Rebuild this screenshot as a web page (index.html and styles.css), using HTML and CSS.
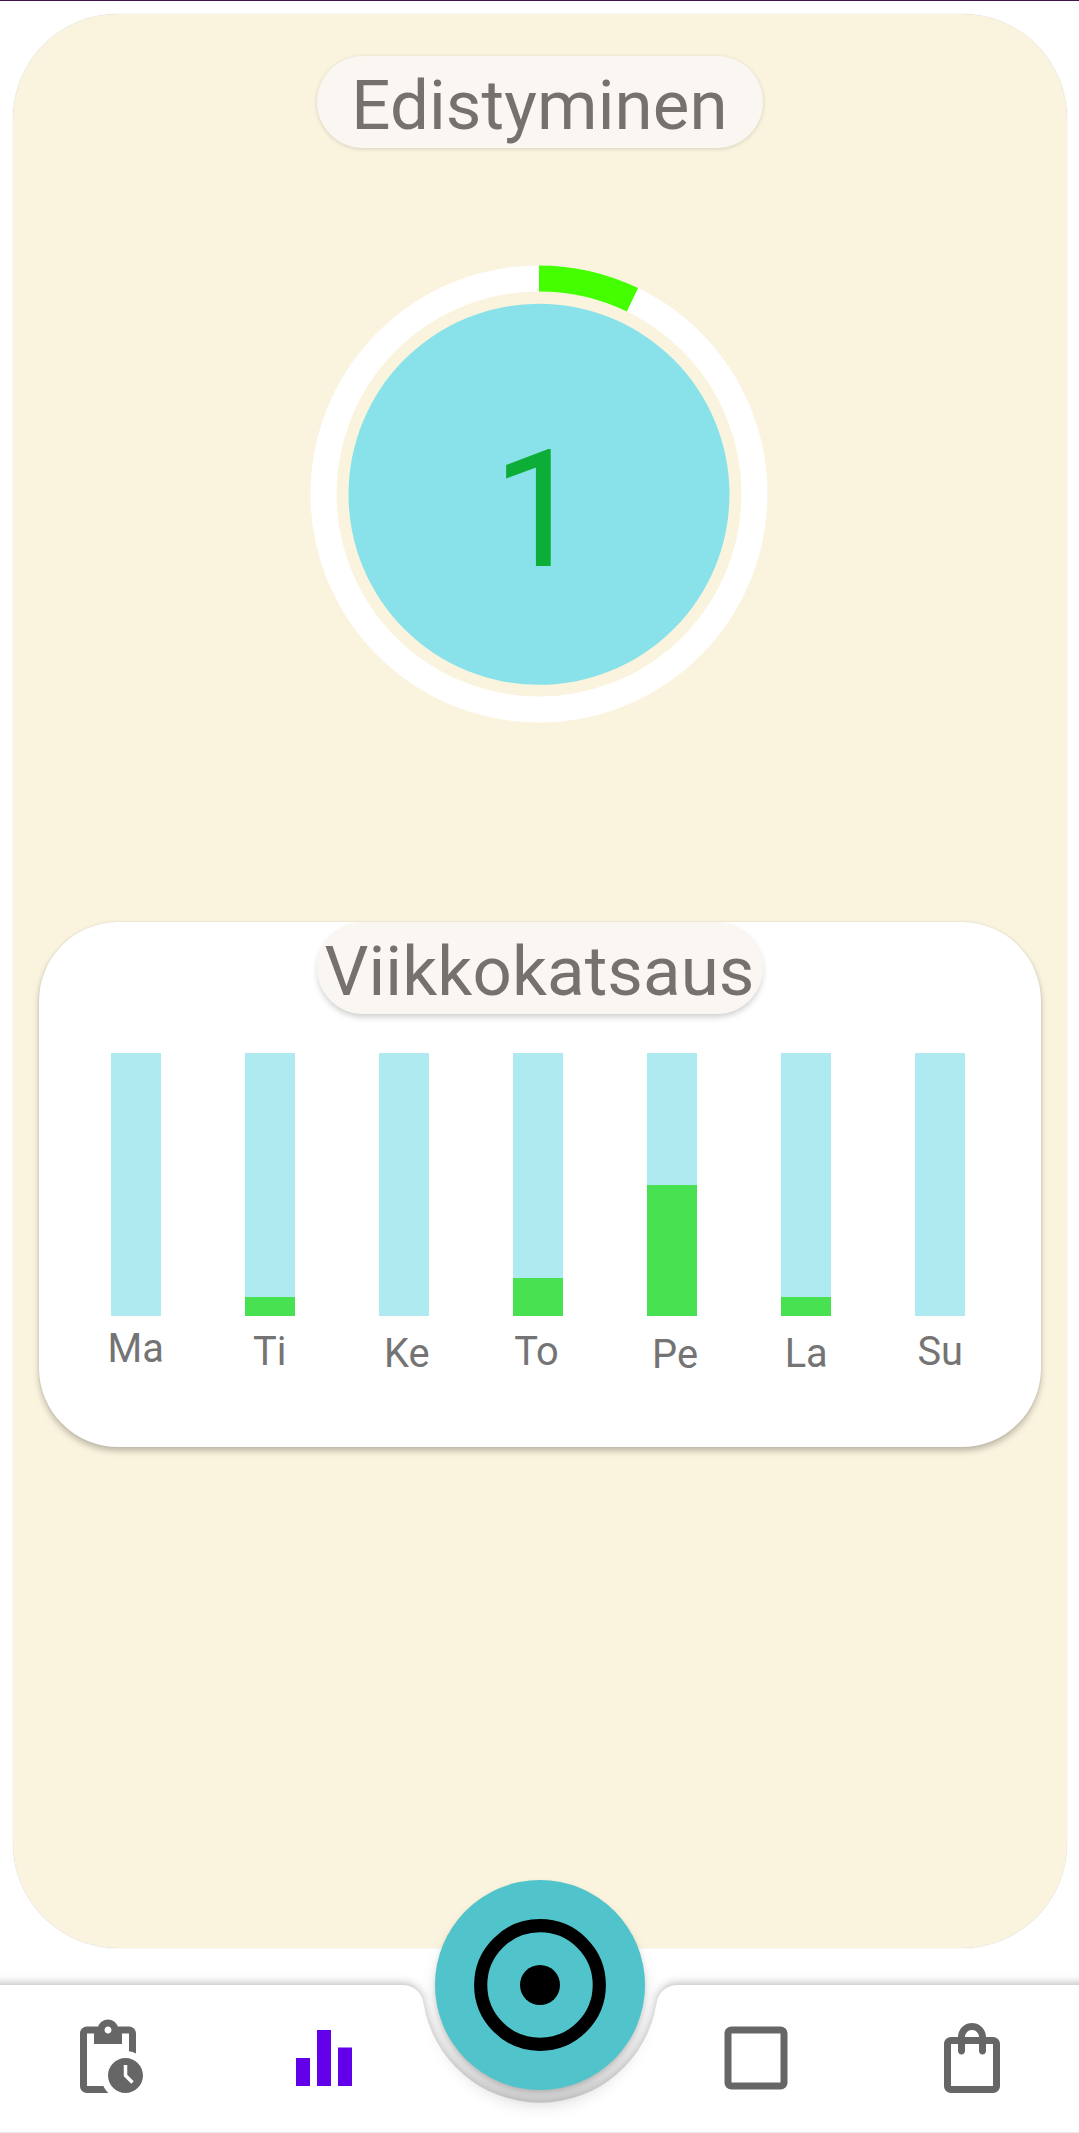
FILE: index.html
```html
<!DOCTYPE html>
<html lang="fi">
<head>
<meta charset="utf-8">
<title>Edistyminen</title>
<link rel="stylesheet" href="styles.css">
</head>
<body>
<div class="screen">
  <main class="panel">
    <h1 class="pill">Edistyminen</h1>
    <section class="progress">
      <svg class="progress-ring" viewBox="0 0 458 458" aria-hidden="true">
        <circle class="ring-track" cx="229" cy="229" r="215.5"/>
        <circle class="ring-value" cx="229" cy="229" r="215.5" pathLength="14" stroke-dasharray="1 13" transform="rotate(-90 229 229)"/>
        <circle class="ring-disc" cx="229" cy="229.3" r="190.5"/>
      </svg>
      <span class="progress-count">1</span>
    </section>
    <section class="week">
      <h2 class="pill">Viikkokatsaus</h2>
      <div class="chart">
        <div class="day ma"><div class="bar"></div><span class="label">Ma</span></div>
        <div class="day ti"><div class="bar"><div class="fill" style="height:7.143%"></div></div><span class="label">Ti</span></div>
        <div class="day ke"><div class="bar"></div><span class="label">Ke</span></div>
        <div class="day to"><div class="bar"><div class="fill" style="height:14.286%"></div></div><span class="label">To</span></div>
        <div class="day pe"><div class="bar"><div class="fill" style="height:50%"></div></div><span class="label">Pe</span></div>
        <div class="day la"><div class="bar"><div class="fill" style="height:7.143%"></div></div><span class="label">La</span></div>
        <div class="day su"><div class="bar"></div><span class="label">Su</span></div>
      </div>
    </section>
  </main>
  <nav class="nav">
    <svg class="nav-shape" viewBox="0 0 1080 148" aria-hidden="true">
      <path d="M-40 0H402.6A21 21 0 0 1 423.4 17.8A118 118 0 0 0 656.6 17.8A21 21 0 0 1 677.4 0H1120V190H-40Z"/>
    </svg>
    <div class="nav-items">
      <a class="item"><svg viewBox="0 0 24 24"><path d="M17 12c-2.76 0-5 2.24-5 5s2.24 5 5 5 5-2.24 5-5-2.24-5-5-5zm1.65 7.35L16.5 17.2V14h1v2.79l1.85 1.85-.7.71zM18 3h-3.18C14.4 1.84 13.3 1 12 1s-2.4.84-2.82 2H6c-1.1 0-2 .9-2 2v15c0 1.1.9 2 2 2h6.11c-.59-.57-1.07-1.25-1.42-2H6V5h2v3h8V5h2v5.08c.71.1 1.38.31 2 .6V5c0-1.1-.9-2-2-2zm-6 2c-.55 0-1-.45-1-1s.45-1 1-1 1 .45 1 1-.45 1-1 1z"/></svg></a>
      <a class="item active"><svg viewBox="0 0 24 24"><path d="M10 20h4V4h-4v16zm-6 0h4v-8H4v8zM16 9v11h4V9h-4z"/></svg></a>
      <span class="item"></span>
      <a class="item"><svg viewBox="0 0 24 24"><path d="M19 5v14H5V5h14m0-2H5c-1.1 0-2 .9-2 2v14c0 1.1.9 2 2 2h14c1.1 0 2-.9 2-2V5c0-1.1-.9-2-2-2z"/></svg></a>
      <a class="item"><svg viewBox="0 0 24 24"><path d="M18 6h-2c0-2.21-1.79-4-4-4S8 3.79 8 6H6c-1.1 0-2 .9-2 2v12c0 1.1.9 2 2 2h12c1.1 0 2-.9 2-2V8c0-1.1-.9-2-2-2zm-6-2c1.1 0 2 .9 2 2h-4c0-1.1.9-2 2-2zm6 16H6V8h2v2c0 .55.45 1 1 1s1-.45 1-1V8h4v2c0 .55.45 1 1 1s1-.45 1-1V8h2v12z"/></svg></a>
    </div>
    <button class="fab" aria-label="Aloita">
      <svg viewBox="0 0 210 210"><circle cx="105" cy="105" r="59.3" fill="none" stroke="#000" stroke-width="13.2"/><circle cx="105" cy="105" r="20"/></svg>
    </button>
  </nav>
</div>
</body>
</html>
```
FILE: styles.css
```css
* { box-sizing: border-box; }

body {
  margin: 0;
  background: #fff;
  font-family: Roboto, sans-serif;
}

.screen {
  display: flex;
  flex-direction: column;
  justify-content: space-between;
  width: 1079px;
  height: 2133px;
  overflow: hidden;
  padding-top: 13px;
  border-top: 1px solid #3b1450;
}

.panel {
  display: flex;
  flex-direction: column;
  align-items: center;
  width: 1054px;
  height: 1934px;
  margin-left: 13px;
  padding-top: 42px;
  border-radius: 105px;
  background: #faf3dd;
  box-shadow: 0 0 1px rgba(60, 50, 60, .3);
}

.pill {
  width: 446px;
  height: 92px;
  margin: 0;
  padding-top: 7px;
  border-radius: 46px;
  background: #faf7f2;
  box-shadow: 0 1px 4px rgba(0, 0, 0, .14);
  color: #76716d;
  font-size: 69px;
  font-weight: 400;
  letter-spacing: .12px;
  line-height: 85px;
  text-align: center;
  text-indent: -1px;
  white-space: nowrap;
}

.progress {
  display: grid;
  place-items: center;
  width: 458px;
  height: 458px;
  margin: 117px 3px 0 0;
}

.progress > * { grid-area: 1 / 1; }

.progress-ring {
  width: 458px;
  height: 458px;
}

.ring-track, .ring-value {
  fill: none;
  stroke: #fff;
  stroke-width: 26;
}

.ring-value { stroke: #43ff00; }
.ring-disc { fill: #89e2ea; }

.progress-count {
  color: #0dae37;
  font-size: 163.5px;
  line-height: 192px;
  padding-top: 32px;
}

.week {
  display: flex;
  flex-direction: column;
  align-items: center;
  width: 1002px;
  height: 525px;
  margin-top: 199px;
  border-radius: 79px;
  background: #fff;
  box-shadow: 0 4px 6px rgba(0, 0, 0, .24), 0 0 2px rgba(0, 0, 0, .1);
}

.week .pill { box-shadow: 0 4px 6px -1px rgba(0, 0, 0, .2); }

.chart {
  display: grid;
  grid-template-columns: repeat(7, 134.1px);
  margin-top: 39px;
  margin-right: 4px;
}

.day {
  display: flex;
  flex-direction: column;
  align-items: center;
}

.bar {
  display: flex;
  align-items: flex-end;
  width: 50px;
  height: 263px;
  background: #afeaf0;
}

.fill {
  width: 100%;
  background: #47e152;
}

.label {
  margin-top: 10px;
  color: #747474;
  font-size: 39.8px;
  line-height: 46px;
}

.ti .label, .to .label, .su .label { margin-top: 13px; }
.ke .label, .la .label { margin-top: 15px; }
.pe .label { margin-top: 16px; }
.ke .label { margin-left: 6px; }
.to .label { margin-right: 3px; }
.pe .label { margin-left: 6px; }

.nav {
  position: relative;
  height: 148px;
}

.nav-shape {
  position: absolute;
  top: 0;
  left: 0;
  width: 1080px;
  height: 148px;
  overflow: visible;
  fill: #fff;
  filter: drop-shadow(0 -2px 4px rgba(0, 0, 0, .26));
}

.nav-items {
  position: relative;
  z-index: 1;
  display: grid;
  grid-template-columns: repeat(5, 216px);
  height: 148px;
  padding-top: 31px;
  border-bottom: 1px solid #ececec;
}

.item {
  display: flex;
  justify-content: center;
  color: #666;
}

.item svg {
  width: 84px;
  height: 84px;
  fill: currentColor;
}

.item.active { color: #6200ea; }

.fab {
  position: absolute;
  top: -105px;
  left: 435px;
  width: 210px;
  height: 210px;
  padding: 0;
  border: 0;
  border-radius: 50%;
  background: #50c4ca;
  box-shadow: 0 15px 20px -6px rgba(0, 0, 0, .27), 0 2px 5px rgba(0, 0, 0, .1);
}

.fab svg {
  display: block;
  width: 210px;
  height: 210px;
}
```
